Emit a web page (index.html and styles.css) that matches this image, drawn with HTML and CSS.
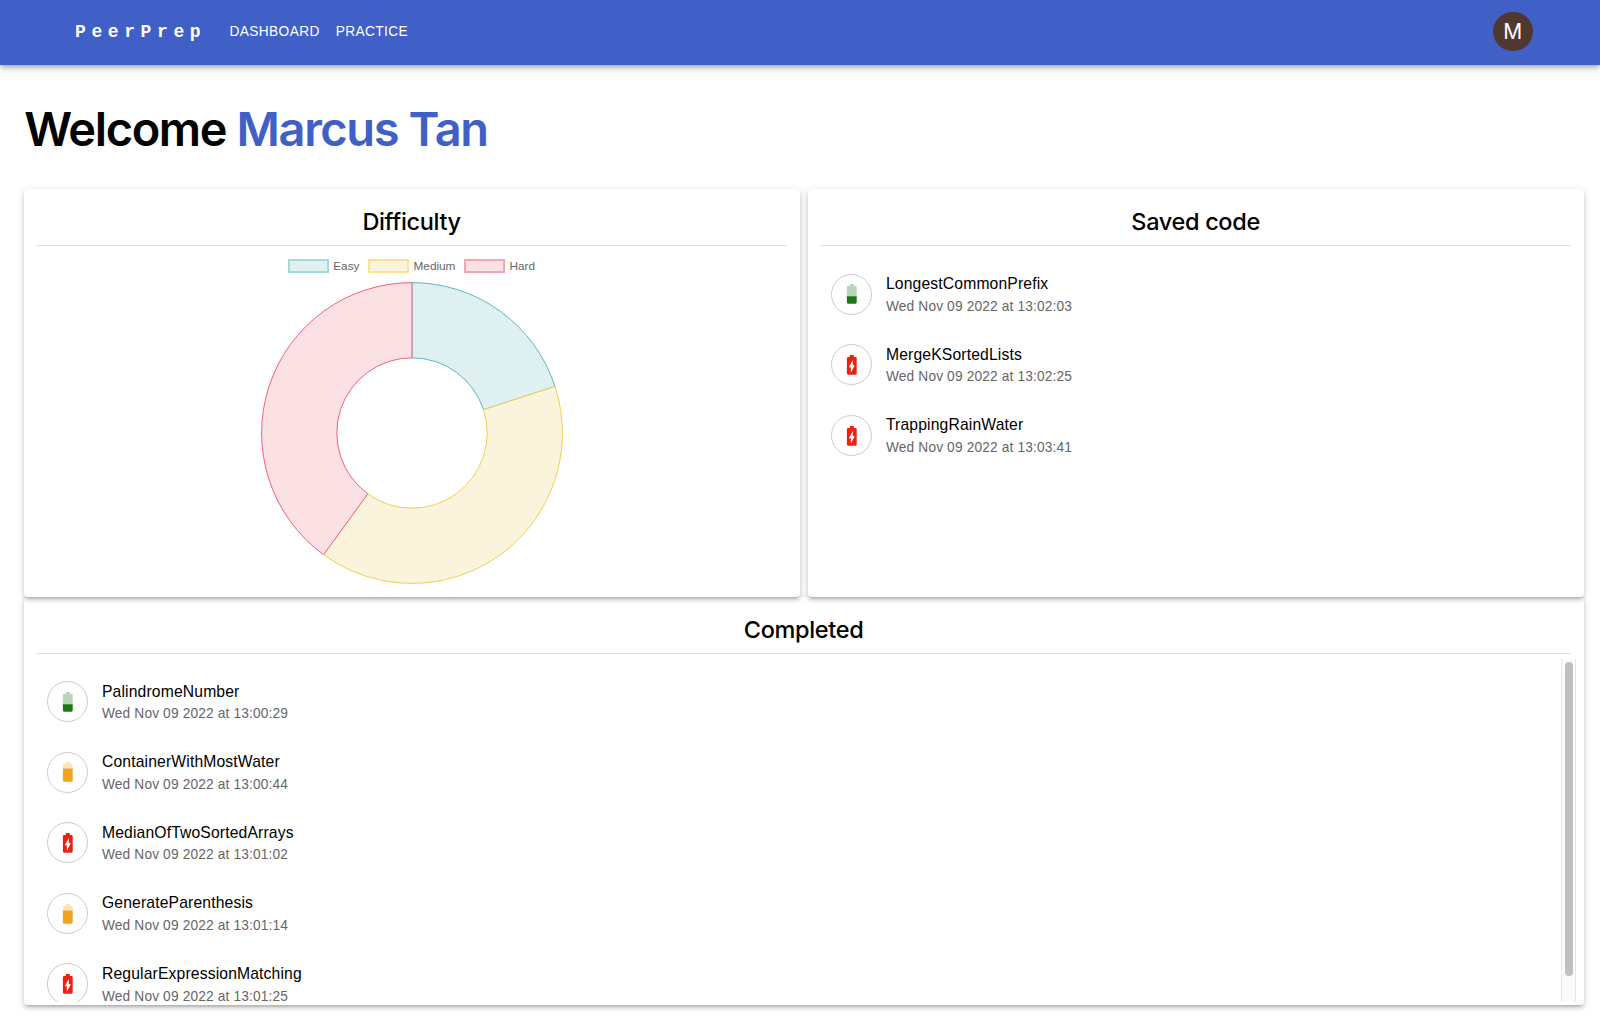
FILE: index.html
```html
<!DOCTYPE html>
<html lang="en">
<head>
<meta charset="utf-8">
<title>PeerPrep</title>
<link rel="stylesheet" href="styles.css">
</head>
<body>
<svg class="sprite" aria-hidden="true">
  <symbol id="easy" viewBox="0 0 24 24">
    <path opacity=".3" d="M17 5.33C17 4.6 16.4 4 15.67 4H14V2h-4v2H8.33C7.6 4 7 4.6 7 5.33V15h10V5.33z"/>
    <path d="M7 14.6v6.07C7 21.4 7.6 22 8.33 22h7.33c.74 0 1.34-.6 1.34-1.33V14.6H7z"/>
  </symbol>
  <symbol id="medium" viewBox="0 0 24 24">
    <path opacity=".3" d="M17 5.33C17 4.6 16.4 4 15.67 4H14V2h-4v2H8.33C7.6 4 7 4.6 7 5.33V9h10V5.33z"/>
    <path d="M7 8.7v11.97C7 21.4 7.6 22 8.33 22h7.33c.74 0 1.34-.6 1.34-1.33V8.7H7z"/>
  </symbol>
  <symbol id="hard" viewBox="0 0 24 24">
    <path d="M15.67 4H14V2h-4v2H8.33C7.6 4 7 4.6 7 5.33v15.33C7 21.4 7.6 22 8.33 22h7.33c.74 0 1.34-.6 1.34-1.33V5.33C17 4.6 16.4 4 15.67 4zM11 20v-5.5H9L13 7v5.5h2L11 20z"/>
  </symbol>
</svg>
<header class="navbar">
  <span class="logo">PeerPrep</span>
  <nav class="links"><span class="link">DASHBOARD</span><span class="link">PRACTICE</span></nav>
  <span class="avatar">M</span>
</header>
<main class="page">
  <h1 class="welcome">Welcome <span class="name">Marcus Tan</span></h1>
  <div class="top-row">
    <section class="card">
      <h2 class="card-title">Difficulty</h2>
      <div class="legend">
        <span class="key"><i class="swatch swatch-easy"></i>Easy</span>
        <span class="key"><i class="swatch swatch-medium"></i>Medium</span>
        <span class="key"><i class="swatch swatch-hard"></i>Hard</span>
      </div>
      <svg class="donut" width="304" height="304" viewBox="-152 -152 304 304">
        <path class="slice-easy" d="M0-150.4A150.4 150.4 0 0 1 143.04-46.48L71.52-23.24A75.2 75.2 0 0 0 0-75.2Z"/>
        <path class="slice-medium" d="M143.04-46.48A150.4 150.4 0 0 1-88.4 121.68L-44.2 60.84A75.2 75.2 0 0 0 71.52-23.24Z"/>
        <path class="slice-hard" d="M-88.4 121.68A150.4 150.4 0 0 1 0-150.4L0-75.2A75.2 75.2 0 0 0-44.2 60.84Z"/>
      </svg>
    </section>
    <section class="card">
      <h2 class="card-title">Saved code</h2>
      <ul class="list">
        <li class="item"><span class="badge easy"><svg class="icon"><use href="#easy"/></svg></span><div class="text"><p class="problem">LongestCommonPrefix</p><p class="date">Wed Nov 09 2022 at 13:02:03</p></div></li>
        <li class="item"><span class="badge hard"><svg class="icon"><use href="#hard"/></svg></span><div class="text"><p class="problem">MergeKSortedLists</p><p class="date">Wed Nov 09 2022 at 13:02:25</p></div></li>
        <li class="item"><span class="badge hard"><svg class="icon"><use href="#hard"/></svg></span><div class="text"><p class="problem">TrappingRainWater</p><p class="date">Wed Nov 09 2022 at 13:03:41</p></div></li>
      </ul>
    </section>
  </div>
  <section class="card completed">
    <h2 class="card-title">Completed</h2>
    <div class="scroller">
      <ul class="list">
        <li class="item"><span class="badge easy"><svg class="icon"><use href="#easy"/></svg></span><div class="text"><p class="problem">PalindromeNumber</p><p class="date">Wed Nov 09 2022 at 13:00:29</p></div></li>
        <li class="item"><span class="badge medium"><svg class="icon"><use href="#medium"/></svg></span><div class="text"><p class="problem">ContainerWithMostWater</p><p class="date">Wed Nov 09 2022 at 13:00:44</p></div></li>
        <li class="item"><span class="badge hard"><svg class="icon"><use href="#hard"/></svg></span><div class="text"><p class="problem">MedianOfTwoSortedArrays</p><p class="date">Wed Nov 09 2022 at 13:01:02</p></div></li>
        <li class="item"><span class="badge medium"><svg class="icon"><use href="#medium"/></svg></span><div class="text"><p class="problem">GenerateParenthesis</p><p class="date">Wed Nov 09 2022 at 13:01:14</p></div></li>
        <li class="item"><span class="badge hard"><svg class="icon"><use href="#hard"/></svg></span><div class="text"><p class="problem">RegularExpressionMatching</p><p class="date">Wed Nov 09 2022 at 13:01:25</p></div></li>
      </ul>
      <div class="track"><div class="thumb"></div></div>
    </div>
  </section>
</main>
</body>
</html>
```
FILE: styles.css
```css
* { box-sizing: border-box; margin: 0; padding: 0; }
body { background: #fff; color: #000; font-family: "Liberation Sans", Arial, sans-serif; height: 1036px; overflow: hidden; }
.sprite { display: none; }
.navbar { display: flex; align-items: center; height: 65.4px; padding: 0 67.5px 3px 75px; background: #4060c8; color: #fff; box-shadow: 0 2px 4px -1px rgba(0,0,0,.2), 0 4px 5px rgba(0,0,0,.14), 0 1px 10px rgba(0,0,0,.12); }
.logo { width: 154.5px; padding-top: 2px; font: 700 18px/30px "Liberation Mono", "Courier New", monospace; letter-spacing: 5.6px; }
.links { display: flex; gap: 16px; flex: 1; padding-top: 2px; }
.link { font-size: 13.73px; letter-spacing: .37px; line-height: 24px; }
.avatar { display: flex; align-items: center; justify-content: center; width: 39.3px; height: 39.3px; border-radius: 50%; background: #4e382f; font: 400 21px/1 Inter, sans-serif; }
.page { padding: 0 16.4px 0 23.6px; }
.welcome { height: 123.6px; padding: 32.3px 0 0 .6px; font: 600 47px/62px Inter, sans-serif; letter-spacing: -1.4px; white-space: nowrap; }
.name { color: #4060c8; }
.top-row { position: relative; z-index: 1; display: grid; grid-template-columns: 1fr 1fr; gap: 8px; height: 408px; }
.card { display: flex; flex-direction: column; background: #fff; border-radius: 4px; padding: 12px 12.5px 0; box-shadow: 0 3px 3px -2px rgba(0,0,0,.2), 0 3px 4px rgba(0,0,0,.14), 0 1px 8px rgba(0,0,0,.12); }
.card-title { flex: none; height: 45px; border-bottom: 1px solid #ddd; text-align: center; font: 500 23.5px/41px Inter, sans-serif; letter-spacing: -.33px; }
.legend { display: flex; justify-content: center; gap: 9px; margin-top: 13px; font-size: 11.77px; line-height: 14px; color: #666; }
.key { display: flex; align-items: center; gap: 4.5px; height: 15px; padding-bottom: 1px; }
.swatch { width: 40.6px; height: 14px; margin-top: 1px; border: 2px solid; }
.swatch-easy { background: #dff0f0; border-color: #a5d8d8; }
.swatch-medium { background: #fbf4dd; border-color: #f9e294; }
.swatch-hard { background: #fbe0e4; border-color: #f7a3b2; }
.donut { align-self: center; margin-top: 7px; stroke-width: 1; }
.slice-easy { fill: #dff0f0; stroke: #5cbaba; }
.slice-medium { fill: #fbf4dd; stroke: #f2cf50; }
.slice-hard { fill: #fbe0e4; stroke: #f0617a; }
.list { list-style: none; padding: 13px 11px 0; }
.item { display: flex; align-items: center; gap: 13.7px; height: 70.6px; }
.badge { display: flex; align-items: center; justify-content: center; width: 41.2px; height: 41.2px; border: 1px solid #ccc; border-radius: 50%; }
.icon { width: 23.6px; height: 23.6px; fill: currentColor; }
.easy { color: #1b7613; }
.medium { color: #eea321; }
.hard { color: #ee2010; }
.text { padding-top: 1.2px; }
.problem { margin-top: -.6px; font-size: 15.7px; line-height: 23.5px; letter-spacing: .147px; }
.date { margin-top: 1.2px; font-size: 13.73px; line-height: 20.2px; letter-spacing: .147px; color: #666; }
.completed { height: 407.6px; padding-right: 8px; }
.completed .card-title { margin-right: 4.5px; }
.scroller { display: flex; margin-top: 5px; height: 343px; overflow: hidden; }
.scroller .list { flex: 1; padding-top: 7.4px; }
.track { width: 15px; background: #fafafa; border: solid #e5e5e5; border-width: 0 1px; padding: 3px 2px 0 3px; }
.thumb { width: 8.5px; height: 314px; border-radius: 5px; background: #c0c0c0; }
```
